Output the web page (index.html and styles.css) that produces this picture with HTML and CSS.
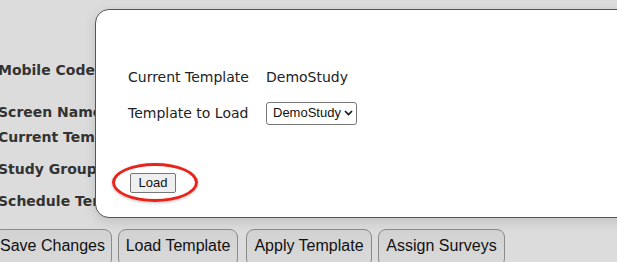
FILE: index.html
```html
<!DOCTYPE html>
<html lang="en">
<head>
  <meta charset="UTF-8">
  <title>Load Template</title>
  <link rel="stylesheet" href="styles.css">
</head>
<body>

  <!-- Study settings form (behind the dialog) -->
  <div class="form">
    <div class="field f-mobile">Mobile Code</div>
    <div class="field f-screen">Screen Name</div>
    <div class="field f-current">Current Template</div>
    <div class="field f-group">Study Group</div>
    <div class="field f-schedule">Schedule Template</div>
  </div>

  <div class="actions">
    <button class="btn btn-save">Save Changes</button>
    <button class="btn btn-load">Load Template</button>
    <button class="btn btn-apply">Apply Template</button>
    <button class="btn btn-assign">Assign Surveys</button>
  </div>

  <!-- Load template dialog -->
  <div class="dialog">
    <div class="dialog-grid">
      <div class="dl-label">Current Template</div>
      <div class="dl-value">DemoStudy</div>
      <div class="dl-label">Template to Load</div>
      <div class="dl-value">
        <span class="select">DemoStudy
          <svg width="9" height="6" viewBox="0 0 9 6"><path d="M1 1 L4.5 4.5 L8 1" fill="none" stroke="#111" stroke-width="1.6"/></svg>
        </span>
      </div>
    </div>
    <div class="dialog-foot">
      <button class="load-btn">Load</button>
      <span class="highlight"></span>
    </div>
  </div>

</body>
</html>
```

FILE: styles.css
```css
/* RESET & BASE */
* {
  margin: 0;
  padding: 0;
  box-sizing: border-box;
}
html, body {
  width: 617px;
  height: 262px;
  overflow: hidden;
}
body {
  position: relative;
  background: #dcdcdc;
  font-family: 'DejaVu Sans', Verdana, sans-serif;
}

/* FORM LABELS */
.form {
  margin-left: -2px;
  padding-top: 60px;
}
.field {
  font-weight: bold;
  font-size: 14px;
  line-height: 20px;
  color: #333;
  white-space: nowrap;
}
.f-screen   { margin-top: 22px; }
.f-current  { margin-top: 5px; }
.f-group    { margin-top: 12px; }
.f-schedule { margin-top: 12px; }

/* ACTION BUTTONS */
.actions {
  display: flex;
  gap: 6px;
  margin-top: 18px;
  margin-left: -7px;
}
.btn {
  flex: none;
  height: 38px;
  padding: 0 0 4px;
  font-family: 'Liberation Sans', Arial, sans-serif;
  font-size: 16px;
  white-space: nowrap;
  color: #111;
  background: linear-gradient(#d2d2d2, #dadada);
  border: 1px solid #8a8a8a;
  border-radius: 8px;
}
.btn-save   { width: 119px; }
.btn-load   { width: 120px; }
.btn-apply  { width: 126px; margin-left: 2px; }
.btn-assign { width: 127px; }

/* DIALOG */
.dialog {
  position: absolute;
  top: 9px;
  left: 95px;
  width: 560px;
  height: 209px;
  background: #fff;
  border: 1px solid #555;
  border-radius: 14px;
  box-shadow: 0 4px 12px rgba(0,0,0,0.12);
  padding: 56px 0 0 32px;
  font-family: 'DejaVu Sans', Tahoma, sans-serif;
  font-size: 14px;
  color: #222;
}
.dialog-grid {
  display: grid;
  grid-template-columns: 138px auto;
  row-gap: 13px;
  align-items: center;
}
.dl-label, .dl-value {
  line-height: 22px;
}
.select {
  display: inline-flex;
  align-items: center;
  gap: 3px;
  height: 23px;
  padding: 0 3px 0 6px;
  border: 1px solid #777;
  border-radius: 3px;
  font-family: 'Liberation Sans', Arial, sans-serif;
  font-size: 13px;
  color: #111;
}
.dialog-foot {
  position: relative;
  margin-top: 48px;
  padding-left: 2px;
}
.load-btn {
  width: 46px;
  height: 20px;
  font-family: 'Liberation Sans', Arial, sans-serif;
  font-size: 13px;
  color: #111;
  background: #efefef;
  border: 1px solid #777;
  border-radius: 2px;
}
.highlight {
  position: absolute;
  left: -16px;
  top: -10px;
  width: 86px;
  height: 39px;
  border: 3px solid #e8231a;
  border-radius: 50%;
  box-shadow: 0 1px 3px rgba(0,0,0,0.25);
}
```
